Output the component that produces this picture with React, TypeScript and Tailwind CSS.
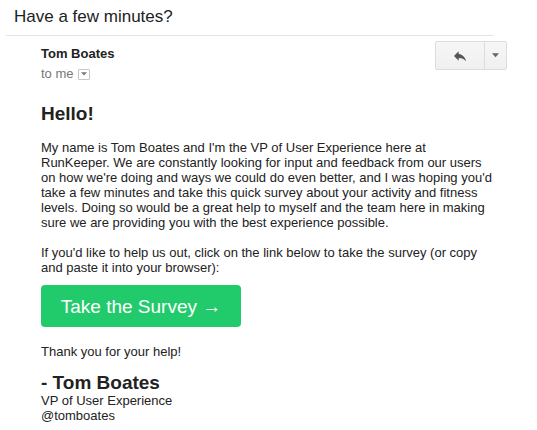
import React from 'react';

const ReplyIcon: React.FC = () => (
  <svg width="16" height="16" viewBox="0 0 24 24" className="fill-[#555]">
    <path d="M10 9V5l-7 7 7 7v-4.1c5 0 8.5 1.6 11 5.1-1-5-4-10-11-11z" />
  </svg>
);

const Caret: React.FC<{ size?: number; color?: string }> = ({ size = 7, color = '#666' }) => (
  <svg width={size} height={Math.ceil(size / 2) + 1} viewBox="0 0 8 5">
    <path d="M0 0h8L4 4.5z" fill={color} />
  </svg>
);

export default function App() {
  return (
    <div className="w-[537px] h-[430px] bg-white overflow-hidden font-['Liberation_Sans',Arial,sans-serif] text-[#222]">
      {/* subject */}
      <div className="pl-[14px] pt-[5px] h-[35px] text-[17px] leading-[24px]">Have a few minutes?</div>
      <div className="ml-[6px] w-[488px] border-t border-[#e5e5e5]" />

      {/* header */}
      <div className="flex pl-[41px] pr-[30px] pt-[4px]">
        <div className="flex-1 pt-[6px]">
          <div className="text-[13px] leading-[16px] font-bold">Tom Boates</div>
          <div className="flex items-center gap-[4px] mt-[4px] text-[13px] leading-[16px] text-[#777]">
            <span>to me</span>
            <span className="w-[12px] h-[11px] border border-[#c6c6c6] rounded-[1px] flex items-center justify-center">
              <Caret size={6} color="#777" />
            </span>
          </div>
        </div>
        <div className="flex h-[29px] mt-[1px] border border-[#dcdcdc] rounded-[2px] bg-gradient-to-b from-[#f6f6f6] to-[#f0f0f0]">
          <div className="w-[49px] flex items-center justify-center border-r border-[#dcdcdc]">
            <ReplyIcon />
          </div>
          <div className="w-[21px] flex items-center justify-center">
            <Caret />
          </div>
        </div>
      </div>

      {/* body */}
      <div className="ml-[41px] w-[490px] text-[13px] leading-[15px] whitespace-nowrap">
        <h1 className="mt-[21px] text-[19px] leading-[22px] font-bold">Hello!</h1>
        <p className="mt-[15px]">
          My name is Tom Boates and I'm the VP of User Experience here at
          <br />
          RunKeeper. We are constantly looking for input and feedback from our users
          <br />
          on how we're doing and ways we could do even better, and I was hoping you'd
          <br />
          take a few minutes and take this quick survey about your activity and fitness
          <br />
          levels. Doing so would be a great help to myself and the team here in making
          <br />
          sure we are providing you with the best experience possible.
        </p>
        <p className="mt-[15px]">
          If you'd like to help us out, click on the link below to take the survey (or copy
          <br />
          and paste it into your browser):
        </p>
        <a className="mt-[10px] w-[200px] h-[42px] flex items-center justify-center rounded-[4px] bg-[#21cb6b] text-white text-[19px]">
          Take the Survey →
        </a>
        <p className="mt-[17px]">Thank you for your help!</p>
        <div className="mt-[14px] text-[19px] leading-[20px] font-bold">- Tom Boates</div>
        <div>VP of User Experience</div>
        <div>@tomboates</div>
      </div>
    </div>
  );
}
